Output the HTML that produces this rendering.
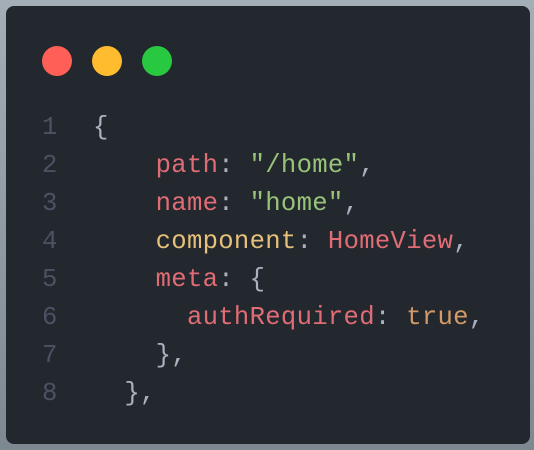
<!DOCTYPE html>
<html><head><style>
html,body{margin:0;padding:0}
body{width:534px;height:450px;background:linear-gradient(#a4aeb6,#7d8890);position:relative;overflow:hidden}
.card{position:absolute;left:6px;top:6px;width:524px;height:438px;background:#23272e;border-radius:8px}
.dot{position:absolute;top:46px;width:30px;height:30px;border-radius:50%}
.code{position:absolute;left:42px;top:109px;font-family:"Liberation Mono",monospace;font-size:25.6px;letter-spacing:0.3px;line-height:38px;color:#abb2bf;white-space:pre}
.n{color:#4b5263;display:inline-block;width:51px}
.r{color:#e06c75}.g{color:#98c379}.y{color:#e5c07b}.o{color:#d19a66}
</style></head><body>
<div class="card"></div>
<div class="dot" style="left:42px;background:#ff5f57"></div>
<div class="dot" style="left:92px;background:#febc2e"></div>
<div class="dot" style="left:142px;background:#28c840"></div>
<div class="code"><span class="n">1</span>{
<span class="n">2</span>    <span class="r">path</span>: <span class="g">"/home"</span>,
<span class="n">3</span>    <span class="r">name</span>: <span class="g">"home"</span>,
<span class="n">4</span>    <span class="y">component</span>: <span class="r">HomeView</span>,
<span class="n">5</span>    <span class="r">meta</span>: {
<span class="n">6</span>      <span class="r">authRequired</span>: <span class="o">true</span>,
<span class="n">7</span>    },
<span class="n">8</span>  },</div>
</body></html>
